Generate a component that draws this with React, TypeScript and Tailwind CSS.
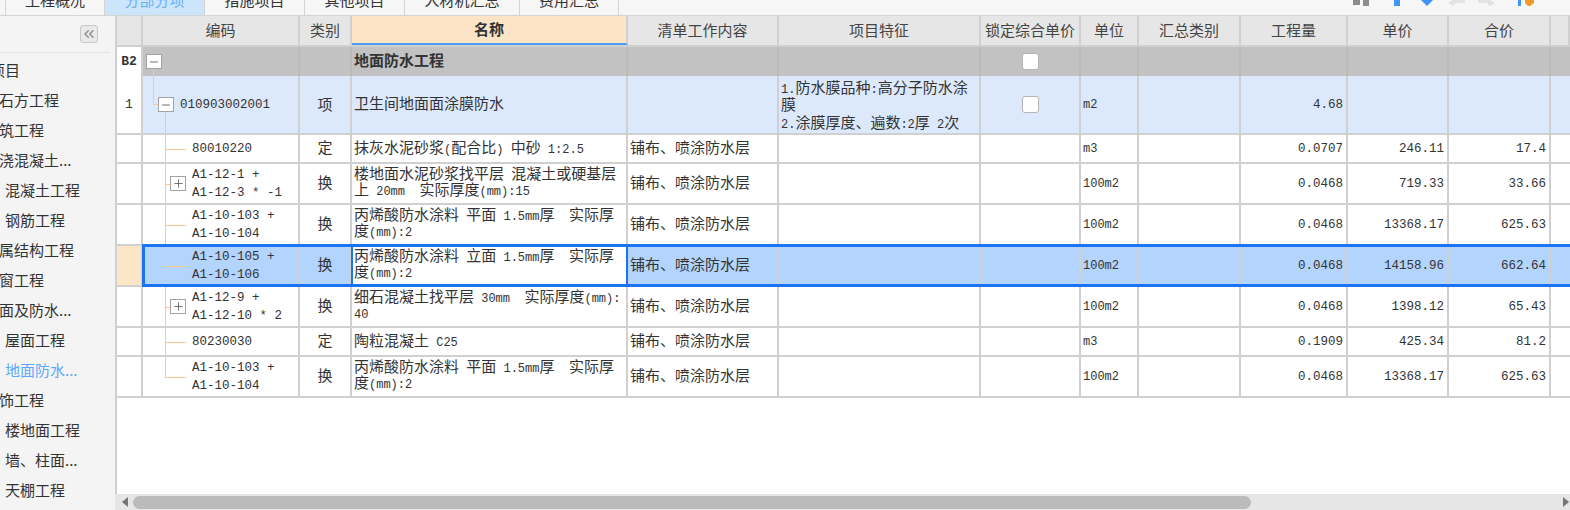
import React from 'react';
import { ChevronsLeft, Minus, Plus } from 'lucide-react';

const COLS = 'grid grid-cols-[26px_157px_52px_276px_151px_202px_100px_58px_102px_107px_101px_102px_19px]';
const CELL = 'flex items-center border-r-2 border-[#d0d0d0] min-w-0';
const DARK_CELL = 'flex items-center border-r-2 border-[#bababa] min-w-0';

const tabs = [
  { label: '工程概况', w: 'w-[99px]' },
  { label: '分部分项', w: 'w-[100px]', active: true },
  { label: '措施项目', w: 'w-[100px]' },
  { label: '其他项目', w: 'w-[100px]' },
  { label: '人材机汇总', w: 'w-[115px]' },
  { label: '费用汇总', w: 'w-[100px]' },
];

const sideItems = [
  { label: '整个项目', indent: '-ml-[40px]' },
  { label: '土石方工程', indent: '-ml-[16px]' },
  { label: '砌筑工程', indent: '-ml-[16px]' },
  { label: '现浇混凝土...', indent: '-ml-[16px]' },
  { label: '混凝土工程', indent: 'ml-[5px]' },
  { label: '钢筋工程', indent: 'ml-[5px]' },
  { label: '金属结构工程', indent: '-ml-[16px]' },
  { label: '门窗工程', indent: '-ml-[16px]' },
  { label: '屋面及防水...', indent: '-ml-[16px]' },
  { label: '屋面工程', indent: 'ml-[5px]' },
  { label: '地面防水...', indent: 'ml-[5px]', active: true },
  { label: '装饰工程', indent: '-ml-[16px]' },
  { label: '楼地面工程', indent: 'ml-[5px]' },
  { label: '墙、柱面...', indent: 'ml-[5px]' },
  { label: '天棚工程', indent: 'ml-[5px]' },
];

const headers = ['', '编码', '类别', '名称', '清单工作内容', '项目特征', '锁定综合单价', '单位', '汇总类别', '工程量', '单价', '合价', ''];

type Row = {
  code: string;
  expand?: boolean;
  type: string;
  name: string;
  unit: string;
  qty: string;
  price: string;
  total: string;
  h: string;
  last?: boolean;
  selected?: boolean;
};

const WORK = '铺布、喷涂防水层';

const rows: Row[] = [
  { code: '80010220', type: '定', name: '抹灰水泥砂浆(配合比) 中砂 1:2.5', unit: 'm3', qty: '0.0707', price: '246.11', total: '17.4', h: 'h-[29px]' },
  { code: 'A1-12-1 +\nA1-12-3 * -1', expand: true, type: '换', name: '楼地面水泥砂浆找平层 混凝土或硬基层\n上 20mm  实际厚度(mm):15', unit: '100m2', qty: '0.0468', price: '719.33', total: '33.66', h: 'h-[41px]' },
  { code: 'A1-10-103 +\nA1-10-104', type: '换', name: '丙烯酸防水涂料 平面 1.5mm厚  实际厚\n度(mm):2', unit: '100m2', qty: '0.0468', price: '13368.17', total: '625.63', h: 'h-[41px]' },
  { code: 'A1-10-105 +\nA1-10-106', type: '换', name: '丙烯酸防水涂料 立面 1.5mm厚  实际厚\n度(mm):2', unit: '100m2', qty: '0.0468', price: '14158.96', total: '662.64', h: 'h-[41px]', selected: true },
  { code: 'A1-12-9 +\nA1-12-10 * 2', expand: true, type: '换', name: '细石混凝土找平层 30mm  实际厚度(mm):\n40', unit: '100m2', qty: '0.0468', price: '1398.12', total: '65.43', h: 'h-[41px]' },
  { code: '80230030', type: '定', name: '陶粒混凝土 C25', unit: 'm3', qty: '0.1909', price: '425.34', total: '81.2', h: 'h-[29px]' },
  { code: 'A1-10-103 +\nA1-10-104', type: '换', name: '丙烯酸防水涂料 平面 1.5mm厚  实际厚\n度(mm):2', unit: '100m2', qty: '0.0468', price: '13368.17', total: '625.63', h: 'h-[41px]', last: true },
];

// latin runs are narrower than the cjk ones in this grid
function Mixed({ text }: { text: string }) {
  const parts = text.split(/([\x00-\x7f]+)/).filter(Boolean);
  return (
    <>
      {parts.map((p, i) =>
        /^[\x00-\x7f]/.test(p) ? (
          <span key={i} className="font-['Liberation_Mono',monospace] text-[12px] leading-[0]">
            {p}
          </span>
        ) : (
          <span key={i}>{p}</span>
        ),
      )}
    </>
  );
}

function Num({ children }: { children: React.ReactNode }) {
  return <span className="block font-['Liberation_Mono',monospace] text-[12.5px] leading-[18px] whitespace-pre">{children}</span>;
}

function ToggleBox({ open }: { open: boolean }) {
  return (
    <span className="relative z-10 flex h-[15px] w-[16px] shrink-0 items-center justify-center border border-[#a3a3a3] bg-white text-[#333]">
      {open ? <Minus size={12} strokeWidth={1.4} /> : <Plus size={13} strokeWidth={1.2} />}
    </span>
  );
}

function Checkbox() {
  return <span className="block h-[17px] w-[17px] rounded-[3px] border border-[#b5b5b5] bg-white" />;
}

function TopIcons() {
  return (
    <svg width="190" height="15" viewBox="0 0 190 15" className="shrink-0">
      <path d="M3 0h7v5H3zM13 0h6v6h-6z" fill="#8c8c8c" />
      <rect x="44" y="0" width="6" height="6" fill="#3f94f5" />
      <path d="M71 0h12l-6 6z" fill="#3f94f5" />
      <path d="M98 3l5-3h12v3h-9l-3 3z" fill="#e2e2e2" />
      <path d="M145 3l-5-3h-12v3h9l3 3z" fill="#e2e2e2" />
      <rect x="168" y="0" width="3" height="6" fill="#3f94f5" />
      <path d="M175 0h9v3l-4 3h-2l-3-3z" fill="#f29b2c" />
    </svg>
  );
}

function Sidebar() {
  return (
    <aside className="flex w-[115px] shrink-0 flex-col overflow-hidden bg-[#f4f4f4] font-['Noto_Sans_CJK_SC',sans-serif] text-[15px] text-[#333]">
      <div className="mr-[5px] flex h-[37px] shrink-0 items-start justify-end border-b border-[#e2e2e2] pt-[9px] pr-[12px]">
        <button className="flex h-[18px] w-[18px] items-center justify-center rounded-[3px] border border-[#c9c9c9] bg-[#e9e9e9] text-[#8a8a8a]">
          <ChevronsLeft size={16} strokeWidth={2} />
        </button>
      </div>
      <div className="flex flex-col pt-[2px]">
        {sideItems.map((item) => (
          <div
            key={item.label}
            className={`flex h-[30px] shrink-0 items-center whitespace-nowrap ${item.indent} ${item.active ? 'text-[#5aa9ff]' : ''}`}
          >
            {item.label}
          </div>
        ))}
      </div>
    </aside>
  );
}

function ChildRow({ row }: { row: Row }) {
  const sel = !!row.selected;
  const twoLines = row.name.includes('\n');
  return (
    <div className={`${COLS} ${row.h} relative border-b-2 border-[#d0d0d0] ${sel ? 'bg-[#b3d4fc]' : 'bg-white'}`}>
      <div className={`${CELL} ${sel ? 'bg-[#fde5c8]' : 'bg-white'}`} />
      <div className={`${CELL} relative ${row.expand ? 'pl-[27px]' : 'pl-[49px]'}`}>
        {/* tree connectors */}
        <span className={`absolute left-[22px] top-0 w-px bg-[#f9c98a] ${row.last ? 'h-[20px]' : '-bottom-[2px]'}`} />
        <span className={`absolute left-[22px] top-1/2 h-px bg-[#f9c98a] ${row.expand ? 'w-[5px]' : 'w-[21px]'}`} />
        {row.expand && (
          <span className="mr-[6px]">
            <ToggleBox open={false} />
          </span>
        )}
        <Num>{row.code}</Num>
      </div>
      <div className={`${CELL} justify-center pb-[2px]`}>{row.type}</div>
      <div className={`${CELL} whitespace-pre pl-[2px] ${twoLines ? 'pb-[5px] leading-[16px]' : 'pb-[2px]'} ${sel ? 'bg-white' : ''}`}>
        <div>
          <Mixed text={row.name} />
        </div>
      </div>
      <div className={`${CELL} pb-[2px] pl-[2px]`}>{WORK}</div>
      <div className={CELL} />
      <div className={CELL} />
      <div className={`${CELL} pl-[2px]`}>
        <span className="font-['Liberation_Mono',monospace] text-[12px]">{row.unit}</span>
      </div>
      <div className={CELL} />
      <div className={`${CELL} justify-end pr-[3px]`}>
        <Num>{row.qty}</Num>
      </div>
      <div className={`${CELL} justify-end pr-[3px]`}>
        <Num>{row.price}</Num>
      </div>
      <div className={`${CELL} justify-end pr-[3px]`}>
        <Num>{row.total}</Num>
      </div>
      <div />
      {sel && (
        <>
          <div className="pointer-events-none absolute -top-[2px] -bottom-[2px] left-[25px] right-0 border-[3px] border-r-0 border-[#1a73f0]" />
          <div className="pointer-events-none absolute -top-[2px] -bottom-[2px] left-[234px] w-[277px] border-x-[2px] border-[#1a73f0]" />
        </>
      )}
    </div>
  );
}

export default function App() {
  return (
    <div className="flex h-[510px] w-[1570px] flex-col overflow-hidden bg-white font-['Noto_Sans_CJK_SC',sans-serif] text-[15px] text-[#333]">
      <header className="flex h-[16px] shrink-0 items-start justify-between border-b border-[#d4d4d4] bg-[#f6f6f6] pl-[5px] pr-[30px]">
        <div className="flex h-[15px]">
          {tabs.map((t) => (
            <div
              key={t.label}
              className={`flex h-[15px] justify-center overflow-hidden border-l border-[#d4d4d4] ${t.w} ${t.active ? 'bg-[#cde5fb] text-[#66b1ff]' : 'text-[#333]'} ${t.label === '费用汇总' ? 'border-r' : ''}`}
            >
              <span className="-mt-[9px] leading-[18px]">{t.label}</span>
            </div>
          ))}
        </div>
        <TopIcons />
      </header>

      <div className="flex min-h-0 flex-1">
        <Sidebar />
        <main className="flex min-w-0 flex-1 flex-col">
          <div className="flex-1 overflow-hidden border-l-2 border-[#d0d0d0]">
            <div className={`${COLS} h-[31px] border-b-2 border-[#d0d0d0] bg-[#e6e6e6] text-[#444]`}>
              {headers.map((h, i) => (
                <div
                  key={i}
                  className={
                    h === '名称'
                      ? 'flex items-center justify-center border-b-2 border-r-2 border-b-[#4a9af0] border-r-[#d0d0d0] bg-[#fde4c6] font-bold text-[#333]'
                      : `${CELL} justify-center whitespace-nowrap`
                  }
                >
                  {h}
                </div>
              ))}
            </div>

            <div className={`${COLS} h-[29px] bg-[#c2c2c2]`}>
              <div className={`${CELL} justify-center bg-white font-['Liberation_Mono',monospace] text-[13px] font-bold`}>B2</div>
              <div className={`${DARK_CELL} relative pl-[3px]`}>
                <span className="absolute bottom-0 left-[10px] top-[21px] w-px bg-[#f9c98a]" />
                <ToggleBox open />
              </div>
              <div className={DARK_CELL} />
              <div className={`${DARK_CELL} pb-[2px] pl-[2px] font-bold`}>地面防水工程</div>
              <div className={DARK_CELL} />
              <div className={DARK_CELL} />
              <div className={`${DARK_CELL} justify-center pb-[1px]`}>
                <Checkbox />
              </div>
              <div className={DARK_CELL} />
              <div className={DARK_CELL} />
              <div className={DARK_CELL} />
              <div className={DARK_CELL} />
              <div className={DARK_CELL} />
              <div />
            </div>

            <div className={`${COLS} h-[59px] border-b-2 border-[#d0d0d0] bg-[#dce9fc]`}>
              <div className={`${CELL} justify-center bg-white font-['Liberation_Mono',monospace] text-[13px]`}>1</div>
              <div className={`${CELL} relative pl-[15px]`}>
                <span className="absolute left-[10px] top-0 h-[29px] w-px bg-[#f9c98a]" />
                <span className="absolute left-[10px] top-[28px] h-px w-[5px] bg-[#f9c98a]" />
                <span className="absolute -bottom-[2px] left-[22px] top-[36px] w-px bg-[#f9c98a]" />
                <ToggleBox open />
                <span className="ml-[6px]">
                  <Num>010903002001</Num>
                </span>
              </div>
              <div className={`${CELL} justify-center pb-[1px]`}>项</div>
              <div className={`${CELL} pb-[2px] pl-[2px]`}>卫生间地面面涂膜防水</div>
              <div className={CELL} />
              <div className={`${CELL} whitespace-pre pb-[1px] pl-[2px] leading-[17.5px]`}>
                <div>
                  <Mixed text={'1.防水膜品种:高分子防水涂\n膜\n2.涂膜厚度、遍数:2厚 2次'} />
                </div>
              </div>
              <div className={`${CELL} justify-center`}>
                <Checkbox />
              </div>
              <div className={`${CELL} pl-[2px]`}>
                <span className="font-['Liberation_Mono',monospace] text-[12px]">m2</span>
              </div>
              <div className={CELL} />
              <div className={`${CELL} justify-end pr-[3px]`}>
                <Num>4.68</Num>
              </div>
              <div className={CELL} />
              <div className={CELL} />
              <div />
            </div>

            {rows.map((r, i) => (
              <ChildRow key={i} row={r} />
            ))}
          </div>

          <div className="flex h-[16px] shrink-0 items-center bg-[#e6e6e6] pl-[7px] pr-[1px]">
            <svg width="6" height="10" viewBox="0 0 6 10" className="shrink-0 text-[#777]">
              <path d="M6 0v10L0 5z" fill="currentColor" />
            </svg>
            <div className="ml-[5px] h-[13px] w-[1118px] rounded-full bg-[#bbbbbb]" />
            <div className="flex-1" />
            <svg width="6" height="10" viewBox="0 0 6 10" className="shrink-0 text-[#777]">
              <path d="M0 0v10l6-5z" fill="currentColor" />
            </svg>
          </div>
        </main>
      </div>
    </div>
  );
}
